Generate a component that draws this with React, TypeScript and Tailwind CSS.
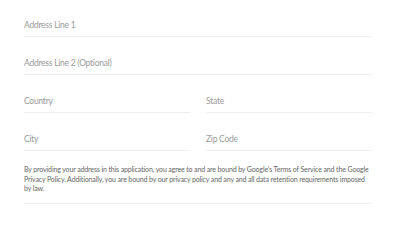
import React from 'react';

const Field = ({ label, className = '' }: { label: string; className?: string }) => (
  <div className={`flex items-end border-b border-[#eeeeee] pb-[5px] ${className}`}>
    <span className="text-[8.5px] leading-[12px] tracking-[-0.25px] text-[#9a9a9a]">{label}</span>
  </div>
);

export default function App() {
  return (
    <div className="w-[410px] h-[243px] bg-white px-6 font-['Lato','Liberation_Sans',sans-serif]">
      <div className="w-[348px]">
        <Field label="Address Line 1" className="h-[37px]" />
        <Field label="Address Line 2 (Optional)" className="h-[38px]" />
        <div className="grid grid-cols-2 gap-x-4">
          <Field label="Country" className="h-[38px]" />
          <Field label="State" className="h-[38px]" />
          <Field label="City" className="h-[38px]" />
          <Field label="Zip Code" className="h-[38px]" />
        </div>
        <p className="border-b border-[#eeeeee] pt-[14px] pb-[9px] pr-[2px] text-[7px] leading-[9.5px] tracking-[-0.13px] text-[#666666]">
          By providing your address in this application, you agree to and are bound by Google's Terms of Service and the Google Privacy Policy. Additionally, you are bound by our privacy policy and any and all data retention requirements imposed by law.
        </p>
      </div>
    </div>
  );
}
